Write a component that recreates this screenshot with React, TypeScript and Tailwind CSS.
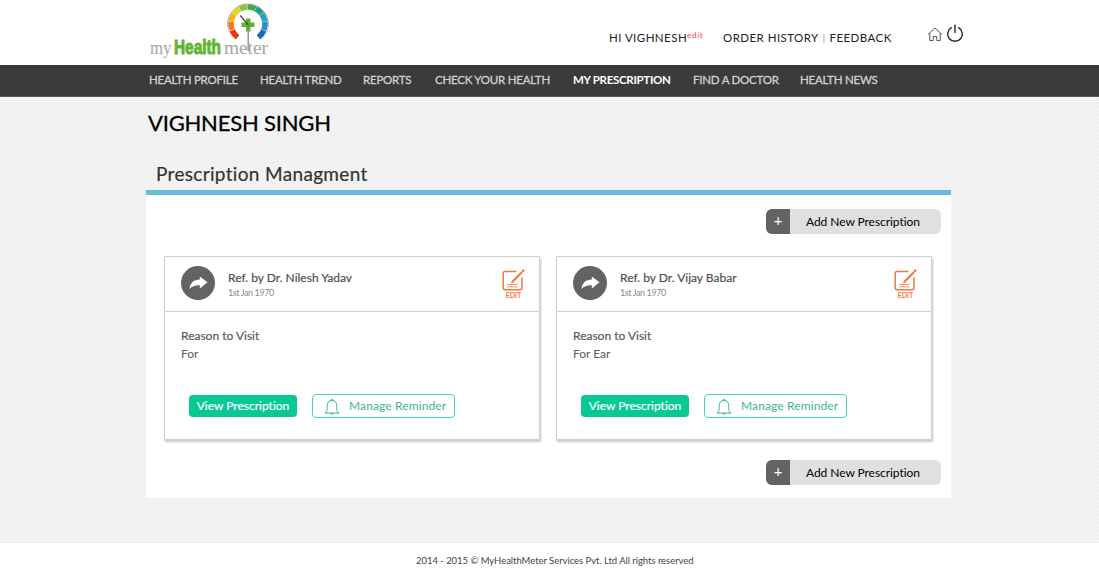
import React from "react";

const navItems = [
  { label: "HEALTH PROFILE", width: "w-[111px]" },
  { label: "HEALTH TREND", width: "w-[103px]" },
  { label: "REPORTS", width: "w-[72px]" },
  { label: "CHECK YOUR HEALTH", width: "w-[138px]" },
  { label: "MY PRESCRIPTION", width: "w-[120px]", active: true },
  { label: "FIND A DOCTOR", width: "w-[107px]" },
  { label: "HEALTH NEWS", width: "w-[90px]" },
];

const prescriptions = [
  { doctor: "Dr. Nilesh Yadav", date: "1st Jan 1970", reason: "For" },
  { doctor: "Dr. Vijay Babar", date: "1st Jan 1970", reason: "For Ear" },
];

const gauge = [
  { color: "#e23a22", from: 218, to: 248 },
  { color: "#f4761c", from: 249, to: 277 },
  { color: "#fbb615", from: 278, to: 305 },
  { color: "#e3d51c", from: 306, to: 331 },
  { color: "#8cc63e", from: 332, to: 359 },
  { color: "#3fae49", from: 0, to: 26 },
  { color: "#1fa08c", from: 27, to: 53 },
  { color: "#20a5c4", from: 54, to: 81 },
  { color: "#2090d0", from: 82, to: 111 },
  { color: "#2468ae", from: 112, to: 142 },
];

function arc(from: number, to: number) {
  const point = (deg: number) => {
    const a = ((deg - 90) * Math.PI) / 180;
    return `${(99 + 17 * Math.cos(a)).toFixed(2)} ${(24 + 17 * Math.sin(a)).toFixed(2)}`;
  };
  return `M${point(from)}A17 17 0 0 1 ${point(to)}`;
}

function Logo() {
  return (
    <svg className="h-[65px] w-[124px]" viewBox="0 0 124 65" aria-label="myHealthmeter">
      <defs>
        <linearGradient id="rim" x1="0" y1="0" x2="0" y2="1">
          <stop offset="0.55" stopColor="#a5a5a5" />
          <stop offset="1" stopColor="#d8d8d8" stopOpacity="0.3" />
        </linearGradient>
      </defs>
      <path d="M84.500 39A20.500 20.500 0 1 1 113.500 39" fill="none" stroke="url(#rim)" strokeWidth="1" />
      {gauge.map((s) => (
        <path key={s.color} d={arc(s.from, s.to)} fill="none" stroke={s.color} strokeWidth="5.6" />
      ))}
      <path d="M97 18.500h4.500v4h4v4.500h-4v4.500h-4.500v-4.500h-4.500v-4.500h4.500z" fill="#5cb531" />
      <path d="M91.300 15.500L99.300 25" stroke="#454545" strokeWidth="1.200" />
      <path d="M99.200 25V51" stroke="#8a8a8a" strokeWidth="1.300" />
      <text x="1" y="54" fontFamily="Liberation Serif, serif" fontSize="18" textLength="21.500" lengthAdjust="spacingAndGlyphs" fill="#a6a6a6">my</text>
      <text transform="translate(25 54) scale(0.77 1)" fontFamily="Liberation Sans, sans-serif" fontWeight="700" fontSize="20" fill="#61b52d" stroke="#61b52d" strokeWidth="1">Health</text>
      <text x="75" y="54" fontFamily="Liberation Serif, serif" fontSize="18" textLength="44" lengthAdjust="spacingAndGlyphs" fill="#a6a6a6">meter</text>
    </svg>
  );
}

function HomeIcon() {
  return (
    <svg className="h-[15px] w-[16px]" viewBox="0 0 16 15" fill="none" stroke="#555" strokeWidth="1">
      <path d="M1 7.500L8 1L15 7.500M2.800 6.300V13.500H6.200V9.500H9.800V13.500H13.200V6.300" strokeLinejoin="round" />
    </svg>
  );
}

function PowerIcon() {
  return (
    <svg className="h-[19px] w-[18px]" viewBox="0 0 18 19" fill="none" stroke="#222" strokeWidth="1.400" strokeLinecap="round">
      <path d="M9 1.200V8.500M5.300 3.700A7.300 7.300 0 1 0 12.700 3.700" />
    </svg>
  );
}

function ShareIcon() {
  return (
    <svg className="h-[34px] w-[34px] shrink-0" viewBox="0 0 34 34">
      <circle cx="17" cy="17" r="17" fill="#636363" />
      <path d="M8.500 23C9.200 17.200 12.500 13.800 18.800 13.600V10.500L26.500 16.300L18.800 22.500V19.200C14 19 11 20 8.500 23Z" fill="#fff" />
    </svg>
  );
}

function EditIcon() {
  return (
    <svg className="h-[22px] w-[23px]" viewBox="0 0 23 22" fill="none" stroke="#f07840" strokeLinecap="round">
      <path d="M13.800 2.500H3Q1.200 2.500 1.200 4.300V18.700Q1.200 20.700 3.200 20.700H18Q20 20.700 20 18.700V9" strokeWidth="1.500" />
      <path d="M10.500 12.700L19.300 3.700" strokeWidth="2.100" />
      <path d="M20.800 2.100L21.400 1.500" strokeWidth="2.200" />
      <path d="M9.300 14L10.500 12.700" strokeWidth="1" />
      <path d="M5.500 15.500H15.500M5.500 17.800H15.500" strokeWidth="0.800" />
    </svg>
  );
}

function BellIcon() {
  return (
    <svg className="h-[17px] w-[16px]" viewBox="0 0 16 17" fill="none" stroke="#3cbc94" strokeWidth="1">
      <path d="M1 15H15M2.300 15C3.300 12.500 3.200 10.800 3.200 8.200C3.200 4.500 5 2.500 8 2.500S12.800 4.500 12.800 8.200C12.800 10.800 12.700 12.500 13.700 15M6.800 2.500Q6.800 1 8 1T9.200 2.500M6.500 15.200Q6.700 16.400 8 16.400T9.500 15.200" strokeLinecap="round" />
    </svg>
  );
}

function AddButton() {
  return (
    <button className="flex h-[25px] w-[175px] overflow-hidden rounded-[6px] bg-[#e0e0e0] text-black">
      <span className="flex h-full w-[24px] items-center justify-center bg-[#636363] pb-[2px] text-[15px] text-white">+</span>
      <span className="pl-[16px] text-[12px] leading-[26px] tracking-[-0.06px]">Add New Prescription</span>
    </button>
  );
}

function PrescriptionCard({ doctor, date, reason }: { doctor: string; date: string; reason: string }) {
  return (
    <article className="h-[184px] w-[376px] border border-[#cfcfcf] bg-white shadow-[1px_2px_2px_rgba(0,0,0,0.22)]">
      <div className="flex h-[55px] border-b border-[#cfcfcf] pl-[16px] pt-[9px]">
        <ShareIcon />
        <div className="ml-[13px] flex-1 whitespace-nowrap pt-[4px]">
          <h3 className="text-[12px] leading-[16px] text-[#505050] [-webkit-text-stroke:0.2px]">Ref. by {doctor}</h3>
          <p className="text-[9px] leading-[14px] tracking-[-0.4px] text-[#8c8c8c]">{date}</p>
        </div>
        <div className="mr-[14px] flex w-[23px] flex-col items-center pt-[3px] text-[#f07840]">
          <EditIcon />
          <span className="text-[7px] font-bold leading-[8px]">EDIT</span>
        </div>
      </div>
      <div className="pl-[16px] pt-[15px] text-[12px] text-[#5a5a5a]">
        <h4 className="leading-[18px] [-webkit-text-stroke:0.2px]">Reason to Visit</h4>
        <p className="leading-[17px]">{reason}</p>
      </div>
      <div className="flex pl-[24px] pt-[32px]">
        <button className="mt-px h-[22px] w-[108px] whitespace-nowrap rounded-[4px] bg-[#08c896] text-[12px] text-white [-webkit-text-stroke:0.2px]">View Prescription</button>
        <button className="ml-[15px] flex h-[24px] w-[143px] items-center whitespace-nowrap rounded-[4px] border border-[#45d6ac] pl-[11px] text-[12px] text-[#3cb890]">
          <BellIcon />
          <span className="ml-[9px] tracking-[0.12px]">Manage Reminder</span>
        </button>
      </div>
    </article>
  );
}

export default function App() {
  return (
    <div className="flex h-[570px] w-[1099px] flex-col overflow-hidden bg-[#f2f2f2] font-[Lato,sans-serif] [font-variant-ligatures:none]">
      <header className="flex h-[65px] shrink-0 bg-white pl-[149px] text-[11.5px] text-[#222]">
        <Logo />
        <div className="flex w-[450px] whitespace-nowrap pl-[336px] pt-[30px] leading-[16px] tracking-[0.45px]">
          <div className="flex w-[114px] shrink-0">
            <span>HI VIGHNESH</span>
            <span className="-mt-[3px] text-[8px] tracking-[0.7px] text-[#ff3b3b]">edit</span>
          </div>
          <span>ORDER HISTORY</span>
          <span className="px-[4px] text-[9px] text-[#888]">|</span>
          <span>FEEDBACK</span>
        </div>
        <div className="ml-[204px] flex gap-[3px] pt-[24px]">
          <div className="pt-[3px]"><HomeIcon /></div>
          <PowerIcon />
        </div>
      </header>
      <nav className="flex h-[32px] shrink-0 border-b border-[#555] bg-[#3b3b3b] pl-[149px] text-[11.5px] leading-[29px] text-[#d0d0d0]">
        {navItems.map((item) => (
          <a key={item.label} className={`${item.width} shrink-0 whitespace-nowrap ${item.active ? "font-bold tracking-[-0.3px] text-white" : "tracking-[-0.23px] [-webkit-text-stroke:0.3px]"}`}>
            {item.label}
          </a>
        ))}
      </nav>
      <main className="h-[446px] shrink-0 bg-[#f3f3f3] bg-[radial-gradient(#eeeeee_0.7px,transparent_0.9px)] bg-[size:4px_4px] pl-[146px]">
        <h1 className="h-[66px] pl-[2px] pt-[11px] text-[22px] leading-[30px] tracking-[-0.2px] text-black [-webkit-text-stroke:0.3px]">VIGHNESH SINGH</h1>
        <section className="w-[805px]">
          <h2 className="h-[27px] pl-[10px] text-[19px] leading-[22px] tracking-[0.33px] text-[#333] [-webkit-text-stroke:0.2px]">Prescription Managment</h2>
          <div className="h-[308px] border-t-[5px] border-[#68bbdb] bg-white pl-[18px] pr-[10px]">
            <div className="flex h-[61px] justify-end pt-[14px]"><AddButton /></div>
            <div className="flex gap-[16px]">
              {prescriptions.map((item) => <PrescriptionCard key={item.doctor} {...item} />)}
            </div>
            <div className="flex justify-end pt-[20px]"><AddButton /></div>
          </div>
        </section>
      </main>
      <footer className="flex-1 bg-white pl-[416px] pt-[10px] text-[9.5px] leading-[15px] tracking-[-0.04px] text-[#444]">
        2014 - 2015 © MyHealthMeter Services Pvt. Ltd All rights reserved
      </footer>
    </div>
  );
}
